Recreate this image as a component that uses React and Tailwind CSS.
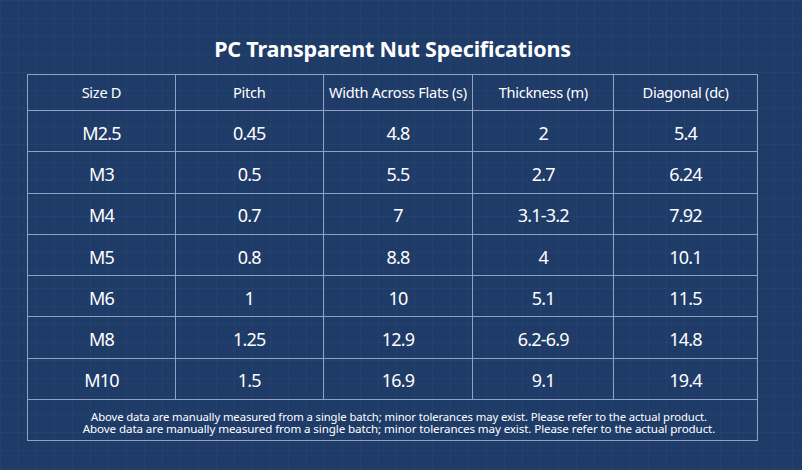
import React from 'react';

const headers = ['Size D', 'Pitch', 'Width Across Flats (s)', 'Thickness (m)', 'Diagonal (dc)'];

const rows = [
  ['M2.5', '0.45', '4.8', '2', '5.4'],
  ['M3', '0.5', '5.5', '2.7', '6.24'],
  ['M4', '0.7', '7', '3.1-3.2', '7.92'],
  ['M5', '0.8', '8.8', '4', '10.1'],
  ['M6', '1', '10', '5.1', '11.5'],
  ['M8', '1.25', '12.9', '6.2-6.9', '14.8'],
  ['M10', '1.5', '16.9', '9.1', '19.4'],
];

const colWidths = ['w-[148px]', 'w-[148px]', 'w-[150px]', 'w-[141px]', 'w-[143px]'];

const note = 'Above data are manually measured from a single batch; minor tolerances may exist. Please refer to the actual product.';

const App = () => {
  return (
    <div
      className="w-[802px] h-[470px] overflow-hidden bg-[#1f3b68] bg-[linear-gradient(rgba(255,255,255,0.025)_1px,transparent_1px),linear-gradient(90deg,rgba(255,255,255,0.025)_1px,transparent_1px)] bg-[size:18px_18px] text-white font-['Noto_Sans',sans-serif]"
    >
      <div className="ml-[27px] w-[731px]">
        {/* Title */}
        <h1 className="pt-[34px] h-[74px] text-center text-[21.5px] font-bold leading-[30px] tracking-[-0.2px]">
          PC Transparent Nut Specifications
        </h1>

        {/* Spec table */}
        <div className="border border-[#8ea3c4]">
          <div className="flex h-[36px] border-b border-[#8ea3c4]">
            {headers.map((h, i) => (
              <div
                key={h}
                className={`${colWidths[i]} flex items-center justify-center pt-[1px] text-[14.6px] tracking-[-0.3px] ${i < 4 ? 'border-r border-[#8ea3c4]' : ''}`}
              >
                {h}
              </div>
            ))}
          </div>
          {rows.map((row) => (
            <div key={row[0]} className="flex h-[41.3px] border-b border-[#8ea3c4]">
              {row.map((cell, i) => (
                <div
                  key={i}
                  className={`${colWidths[i]} flex items-center justify-center pt-[4px] text-[18px] tracking-[-0.8px] ${i < 4 ? 'border-r border-[#8ea3c4]' : ''}`}
                >
                  {cell}
                </div>
              ))}
            </div>
          ))}
          {/* Disclaimer */}
          <div className="h-[40px] flex flex-col items-center justify-center pt-[6px] pl-[13px] text-[11.3px] leading-[12.5px] tracking-[-0.1px]">
            <p>{note}</p>
            <p className="text-[11.6px]">{note}</p>
          </div>
        </div>
      </div>
    </div>
  );
};

export default App;
